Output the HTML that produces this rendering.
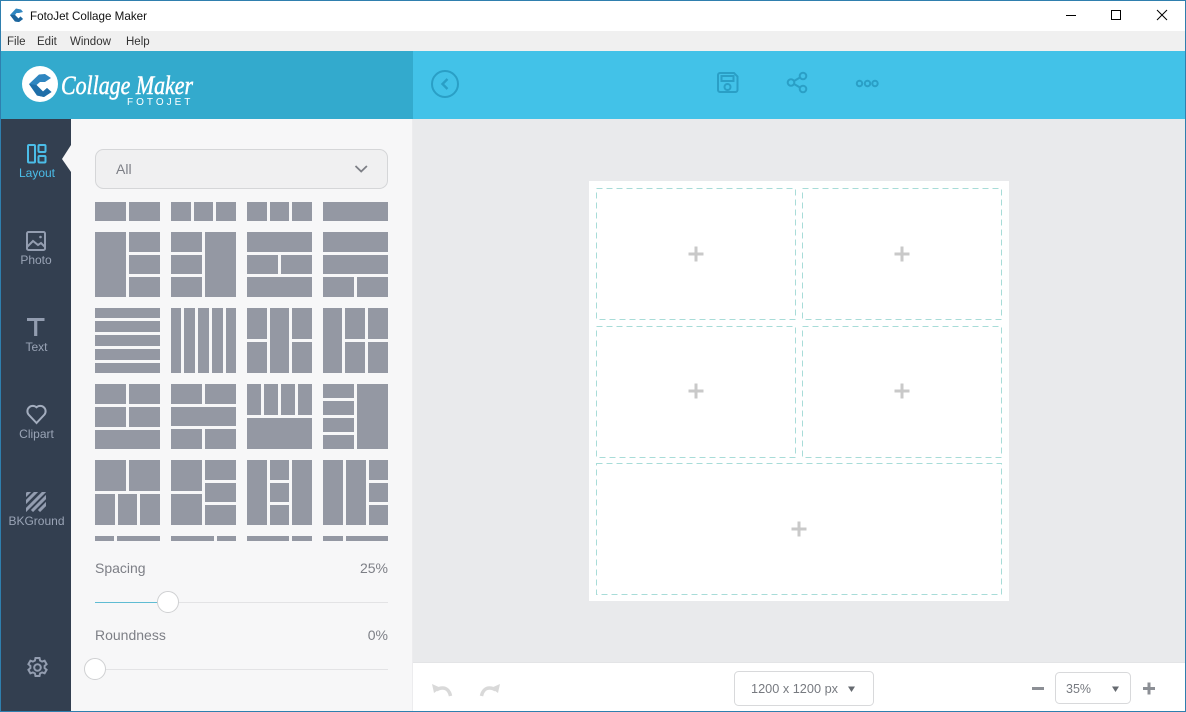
<!DOCTYPE html>
<html><head><meta charset="utf-8"><style>
html,body{margin:0;padding:0;width:1186px;height:712px;overflow:hidden;background:#fff;font-family:"Liberation Sans",sans-serif}
svg{position:absolute;left:0;top:0}
text{font-family:"Liberation Sans",sans-serif}
</style></head><body>
<svg width="1186" height="712" viewBox="0 0 1186 712">
<rect width="1186" height="712" fill="#fff"/>
<!-- menu -->
<rect x="1" y="31" width="1184" height="20" fill="#f0f0f0"/>
<!-- header -->
<rect x="1" y="51" width="412" height="68" fill="#33aacd"/>
<rect x="413" y="51" width="772" height="68" fill="#42c2e8"/>
<!-- sidebar/panel/canvas -->
<rect x="1" y="119" width="70" height="592" fill="#333f50"/>
<rect x="71" y="119" width="342" height="592" fill="#f7f7f8"/>
<rect x="412" y="119" width="1" height="592" fill="#ececee"/>
<rect x="413" y="119" width="772" height="544" fill="#e9eaec"/>
<rect x="413" y="662" width="772" height="1" fill="#e3e4e6"/>
<rect x="413" y="663" width="772" height="48" fill="#fff"/>
<!-- window border -->
<rect x="0" y="0" width="1186" height="1" fill="#2f7fae"/>
<rect x="0" y="0" width="1" height="712" fill="#2f7fae"/>
<rect x="1185" y="0" width="1" height="712" fill="#2f7fae"/>
<rect x="0" y="711" width="1186" height="1" fill="#2f7fae"/>

<!-- title bar -->
<path d="M10 15L16 8.500L21 9.500L23 12L19 13L16.500 13L15 15L18.500 18.500L20.500 16.500L23 19L19 22L15 21.500Z" fill="#2f86c0"/>
<path d="M15 15L18.500 18.500L20.500 16.500L23 19L19 22L15 21.500L10 15Z" fill="#1d659c"/>
<text x="30" y="20" font-size="12" fill="#111" textLength="117" lengthAdjust="spacingAndGlyphs">FotoJet Collage Maker</text>
<text x="7" y="45" font-size="11.500" fill="#333">File</text>
<text x="37" y="45" font-size="11.500" fill="#333">Edit</text>
<text x="70" y="45" font-size="11.500" fill="#333">Window</text>
<text x="126" y="45" font-size="11.500" fill="#333">Help</text>
<path d="M1066 15.500h10" stroke="#000" stroke-width="1"/>
<rect x="1111.500" y="10.500" width="9" height="9" fill="none" stroke="#000"/>
<path d="M1157 10l10 10M1167 10l-10 10" stroke="#000" stroke-width="1"/>

<!-- logo -->
<circle cx="40" cy="84" r="18" fill="#fff"/>
<path d="M29 84L39 74.500L45 74L51 78L45 82L40 82L36.500 85L43 91.500L47 88L51.500 92L44 97L37 95.500Z" fill="#2f86c0"/>
<path d="M29 84L36.500 85L43 91.500L47 88L51.500 92L44 97L37 95.500Z" fill="#1f6ea8"/>
<text x="61" y="94" font-size="26" font-style="italic" fill="#fff" stroke="#fff" stroke-width=".5" textLength="132" lengthAdjust="spacingAndGlyphs" style="font-family:'Liberation Serif',serif">Collage Maker</text>
<text x="127" y="105" font-size="10" fill="#fff" letter-spacing="3">FOTOJET</text>

<!-- top icons -->
<g fill="none" stroke="#2a9fc6" stroke-width="2">
<circle cx="445" cy="84" r="13"/>
<path d="M447.500 79l-5 5 5 5" stroke-width="2.400"/>
<path d="M720 73h14l3.500 3.500V90a2 2 0 0 1-2 2H720a2 2 0 0 1-2-2V75a2 2 0 0 1 2-2z"/>
<rect x="721.500" y="76" width="12" height="5"/>
<circle cx="727.500" cy="87" r="3"/>
<circle cx="803" cy="76" r="3.300"/><circle cx="791" cy="82.500" r="3.300"/><circle cx="803" cy="89" r="3.300"/>
<path d="M794 81l6-3.500M794 84l6 3.500"/>
<circle cx="859.500" cy="83.500" r="2.700"/><circle cx="867.500" cy="83.500" r="2.700"/><circle cx="875" cy="83.500" r="2.700"/>
</g>

<!-- sidebar icons -->
<path d="M71 145L62 159L71 172Z" fill="#f7f7f8"/>
<g fill="none" stroke="#4bbde8" stroke-width="2">
<rect x="28" y="145" width="7" height="17.500" rx="1"/>
<rect x="38.500" y="145" width="7" height="7" rx="1"/>
<rect x="38.500" y="156" width="7" height="6.500" rx="1"/>
</g>
<g fill="none" stroke="#939dB0" stroke-width="2">
<rect x="27" y="232" width="18" height="18" rx="1.500"/>
<path d="M27 247l6-6 5 4 3-2 4 4"/>
</g>
<circle cx="40.500" cy="237" r="1.300" fill="#939db0"/>
<path d="M27 318h17.500v3h-7.200V336h-3.200V321H27z" fill="#939db0"/>
<path d="M36.500 423l-8-8.500a5.400 5.400 0 0 1 8-7.200 5.400 5.400 0 0 1 8 7.200z" fill="none" stroke="#a3adbe" stroke-width="2"/>
<clipPath id="bk"><rect x="26" y="492" width="20" height="20"/></clipPath>
<g clip-path="url(#bk)" stroke="#939db0" stroke-width="3">
<path d="M22 499l10-10M22 506l20-20M25 511l24-24M32 511l18-18M39 511l10-10"/>
</g>
<g font-size="12" text-anchor="middle" fill="#9aa4b6">
<text x="37" y="177" fill="#4bbde8">Layout</text>
<text x="36" y="264">Photo</text>
<text x="36.500" y="351">Text</text>
<text x="36.500" y="438">Clipart</text>
<text x="36.500" y="525">BKGround</text>
</g>
<g fill="none" stroke="#939db0" stroke-width="2">
<circle cx="37.500" cy="667.500" r="3.300"/>
<path d="M35.500 658h4l.6 2.600 2 1 2.500-.9 2 3.500-2 1.700v2.200l2 1.700-2 3.500-2.500-.9-2 1-.6 2.600h-4l-.6-2.600-2-1-2.500.9-2-3.500 2-1.700v-2.200l-2-1.700 2-3.500 2.500.9 2-1z"/>
</g>

<!-- dropdown -->
<rect x="95.500" y="149.500" width="292" height="39" rx="8" fill="#f0f0f1" stroke="#d5d6d8"/>
<text x="116" y="174" font-size="14" fill="#7d7f86">All</text>
<path d="M355.500 166l5.700 5.500 5.700-5.500" fill="none" stroke="#7d7f86" stroke-width="1.800"/>

<!-- layouts -->
<g fill="#9498a3">
<!-- row 0 -->
<g transform="translate(95,202)"><rect width="31" height="19"/><rect x="34" width="31" height="19"/></g>
<g transform="translate(171,202)"><rect width="20" height="19"/><rect x="23" width="19" height="19"/><rect x="45" width="20" height="19"/></g>
<g transform="translate(247,202)"><rect width="20" height="19"/><rect x="23" width="19" height="19"/><rect x="45" width="20" height="19"/></g>
<g transform="translate(323,202)"><rect width="65" height="19"/></g>
<!-- row 1 -->
<g transform="translate(95,232)"><rect width="31" height="65"/><rect x="34" width="31" height="20"/><rect x="34" y="23" width="31" height="19"/><rect x="34" y="45" width="31" height="20"/></g>
<g transform="translate(171,232)"><rect x="34" width="31" height="65"/><rect width="31" height="20"/><rect y="23" width="31" height="19"/><rect y="45" width="31" height="20"/></g>
<g transform="translate(247,232)"><rect width="65" height="20"/><rect y="23" width="31" height="19"/><rect x="34" y="23" width="31" height="19"/><rect y="45" width="65" height="20"/></g>
<g transform="translate(323,232)"><rect width="65" height="20"/><rect y="23" width="65" height="19"/><rect y="45" width="31" height="20"/><rect x="34" y="45" width="31" height="20"/></g>
<!-- row 2 -->
<g transform="translate(95,308)"><rect width="65" height="10"/><rect y="13" width="65" height="11"/><rect y="27" width="65" height="11"/><rect y="41" width="65" height="11"/><rect y="55" width="65" height="10"/></g>
<g transform="translate(171,308)"><rect width="10" height="65"/><rect x="13" width="11" height="65"/><rect x="27" width="11" height="65"/><rect x="41" width="11" height="65"/><rect x="55" width="10" height="65"/></g>
<g transform="translate(247,308)"><rect width="20" height="31"/><rect y="34" width="20" height="31"/><rect x="23" width="19" height="65"/><rect x="45" width="20" height="31"/><rect x="45" y="34" width="20" height="31"/></g>
<g transform="translate(323,308)"><rect width="19" height="65"/><rect x="22" width="20" height="31"/><rect x="22" y="34" width="20" height="31"/><rect x="45" width="20" height="31"/><rect x="45" y="34" width="20" height="31"/></g>
<!-- row 3 -->
<g transform="translate(95,384)"><rect width="31" height="20"/><rect x="34" width="31" height="20"/><rect y="23" width="31" height="20"/><rect x="34" y="23" width="31" height="20"/><rect y="46" width="65" height="19"/></g>
<g transform="translate(171,384)"><rect width="31" height="20"/><rect x="34" width="31" height="20"/><rect y="23" width="65" height="19"/><rect y="45" width="31" height="20"/><rect x="34" y="45" width="31" height="20"/></g>
<g transform="translate(247,384)"><rect width="14" height="31"/><rect x="17" width="14" height="31"/><rect x="34" width="14" height="31"/><rect x="51" width="14" height="31"/><rect y="34" width="65" height="31"/></g>
<g transform="translate(323,384)"><rect width="31" height="14"/><rect y="17" width="31" height="14"/><rect y="34" width="31" height="14"/><rect y="51" width="31" height="14"/><rect x="34" width="31" height="65"/></g>
<!-- row 4 -->
<g transform="translate(95,460)"><rect width="31" height="31"/><rect x="34" width="31" height="31"/><rect y="34" width="20" height="31"/><rect x="23" y="34" width="19" height="31"/><rect x="45" y="34" width="20" height="31"/></g>
<g transform="translate(171,460)"><rect width="31" height="31"/><rect y="34" width="31" height="31"/><rect x="34" width="31" height="20"/><rect x="34" y="23" width="31" height="19"/><rect x="34" y="45" width="31" height="20"/></g>
<g transform="translate(247,460)"><rect width="20" height="65"/><rect x="23" width="19" height="20"/><rect x="23" y="23" width="19" height="19"/><rect x="23" y="45" width="19" height="20"/><rect x="45" width="20" height="65"/></g>
<g transform="translate(323,460)"><rect width="20" height="65"/><rect x="23" width="20" height="65"/><rect x="46" width="19" height="20"/><rect x="46" y="23" width="19" height="19"/><rect x="46" y="45" width="19" height="20"/></g>
<!-- row 5 -->
<rect x="95" y="536" width="19" height="5"/><rect x="117" y="536" width="43" height="5"/>
<rect x="171" y="536" width="43" height="5"/><rect x="217" y="536" width="19" height="5"/>
<rect x="247" y="536" width="42" height="5"/><rect x="292" y="536" width="20" height="5"/>
<rect x="323" y="536" width="20" height="5"/><rect x="346" y="536" width="42" height="5"/>
</g>

<!-- sliders -->
<g font-size="14" fill="#7d7f86">
<text x="95" y="573">Spacing</text>
<text x="388" y="573" text-anchor="end">25%</text>
<text x="95" y="640">Roundness</text>
<text x="388" y="640" text-anchor="end">0%</text>
</g>
<rect x="95" y="602" width="293" height="1" fill="#e3e3e5"/>
<rect x="95" y="602" width="64" height="1" fill="#5fbcd3"/>
<circle cx="168" cy="602" r="10.500" fill="#fff" stroke="#cfd0d2"/>
<rect x="95" y="669" width="293" height="1" fill="#e3e3e5"/>
<circle cx="95" cy="669" r="10.500" fill="#fff" stroke="#cfd0d2"/>

<!-- canvas -->
<rect x="589" y="181" width="420" height="420" fill="#fff"/>
<g fill="none" stroke="#a8dcd8" stroke-width="1" stroke-dasharray="6 4">
<rect x="596.500" y="188.500" width="199" height="131"/>
<rect x="802.500" y="188.500" width="199" height="131"/>
<rect x="596.500" y="326.500" width="199" height="131"/>
<rect x="802.500" y="326.500" width="199" height="131"/>
<rect x="596.500" y="463.500" width="405" height="131"/>
</g>
<g fill="#c9c9c9">
<path d="M694.500 246.500h3v6h6v3h-6v6h-3v-6h-6v-3h6z"/>
<path d="M900.500 246.500h3v6h6v3h-6v6h-3v-6h-6v-3h6z"/>
<path d="M694.500 383.500h3v6h6v3h-6v6h-3v-6h-6v-3h6z"/>
<path d="M900.500 383.500h3v6h6v3h-6v6h-3v-6h-6v-3h6z"/>
<path d="M797.500 521.500h3v6h6v3h-6v6h-3v-6h-6v-3h6z"/>
</g>

<!-- bottom bar -->
<g fill="none" stroke="#d9d9d9" stroke-width="3.500">
<path d="M450.500 696c-1-5-4-8-8-8-2 0-4 .5-6 2"/>
<path d="M481.500 696c1-5 4-8 8-8 2 0 4 .5 6 2"/>
</g>
<path d="M432 684l2 9 7-5z" fill="#d9d9d9"/>
<path d="M500 684l-2 9-7-5z" fill="#d9d9d9"/>
<rect x="734.500" y="671.500" width="139" height="34" rx="4" fill="#fff" stroke="#d8d9db"/>
<text x="751" y="693" font-size="13" fill="#777a80" textLength="87" lengthAdjust="spacingAndGlyphs">1200 x 1200 px</text>
<path d="M848 686.500h7l-3.500 5.500z" fill="#666a70"/>
<rect x="1032" y="687" width="12" height="3" fill="#8c8f95"/>
<rect x="1055.500" y="672.500" width="75" height="31" rx="4" fill="#fff" stroke="#d8d9db"/>
<text x="1066" y="693" font-size="13" fill="#777a80" textLength="25" lengthAdjust="spacingAndGlyphs">35%</text>
<path d="M1112 686.500h7l-3.500 5.500z" fill="#666a70"/>
<path d="M1147.500 682.500h3v4.500h4.500v3h-4.500v4.500h-3V690H1143v-3h4.500z" fill="#8c8f95"/>
</svg>
</body></html>
